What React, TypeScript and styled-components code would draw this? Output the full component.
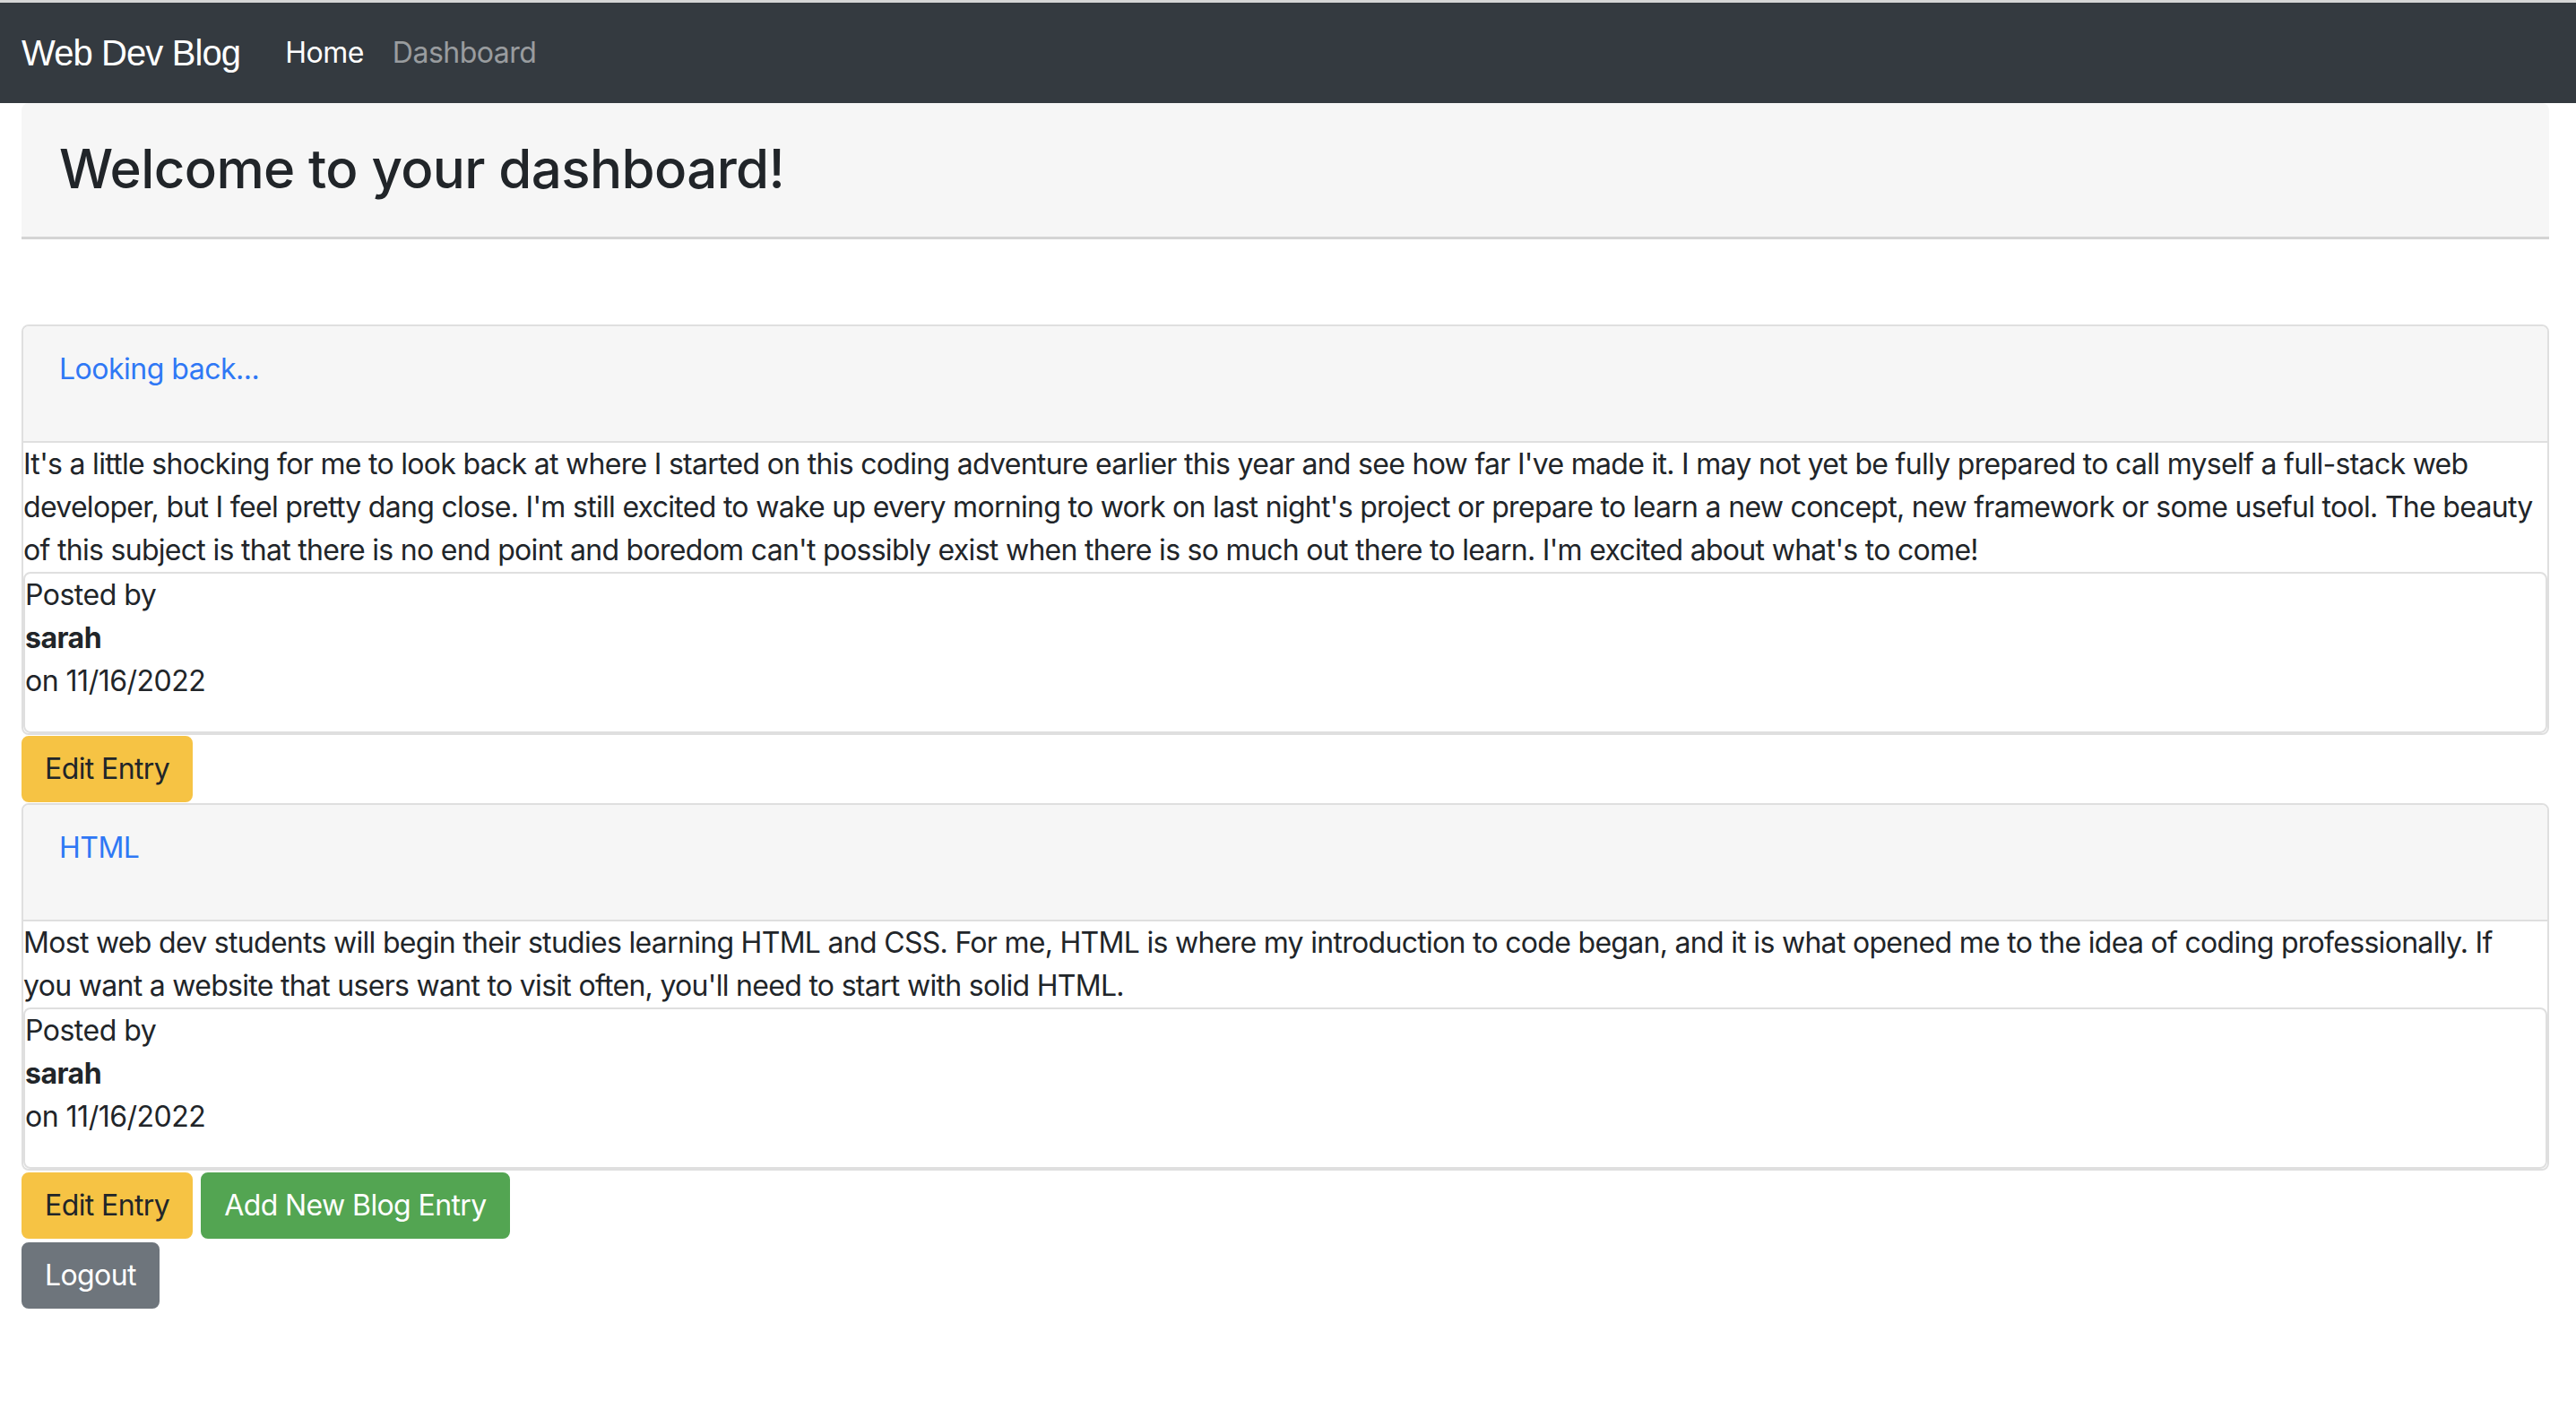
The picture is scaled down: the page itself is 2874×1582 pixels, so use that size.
import React from "react";
import styled, { createGlobalStyle } from "styled-components";

const GlobalStyle = createGlobalStyle`
  html, body { margin: 0; padding: 0; background: #ffffff; }
  body {
    font-family: Inter, "Noto Sans", "Liberation Sans", sans-serif;
    color: #212529;
    font-size: 32px;
    line-height: 48px;
    letter-spacing: -0.7px;
  }
  * { box-sizing: border-box; }
`;

const Navbar = styled.nav`
  display: flex;
  align-items: center;
  height: 115px;
  border-top: 3px solid #d6d6d6;
  background: #343a40;
  padding: 0 24px;
`;

const Brand = styled.a`
  font-family: "Liberation Sans", Arial, sans-serif;
  font-size: 40px;
  line-height: 60px;
  letter-spacing: -0.9px;
  color: #ffffff;
  margin-right: 34px;
  text-decoration: none;
`;

const NavLink = styled.a<{ $active?: boolean }>`
  font-size: 32px;
  line-height: 48px;
  letter-spacing: -0.5px;
  padding: 0 16px;
  color: ${(p) => (p.$active ? "#ffffff" : "rgba(255,255,255,0.5)")};
  text-decoration: none;
`;

const Main = styled.main`
  padding: 0 30px 0 24px;
`;

const PageHeader = styled.header`
  display: flex;
  align-items: center;
  height: 152px;
  padding: 0 42px 4px;
  background: #f6f6f6;
  border-bottom: 3px solid #d4d4d4;
  border-radius: 8px 8px 0 0;
`;

const PageTitle = styled.h2`
  margin: 0;
  font-size: 60px;
  line-height: 72px;
  font-weight: 500;
  letter-spacing: -0.6px;
  color: #212529;
`;

const PostList = styled.section`
  margin-top: 95px;
  display: flex;
  flex-direction: column;
`;

const Card = styled.article`
  border: 2px solid #dfdfdf;
  border-radius: 8px;
  overflow: hidden;
`;

const CardHeader = styled.div`
  padding: 24px 40px;
  background: #f6f6f6;
  border-bottom: 2px solid #dfdfdf;
`;

const TitleLine = styled.p`
  margin: 0 0 32px;
  letter-spacing: -0.5px;
`;

const TitleLink = styled.a`
  color: #2f78f5;
  text-decoration: none;
`;

const Body = styled.p`
  margin: 0;
`;

const Meta = styled.div`
  border: 2px solid #dfdfdf;
  border-radius: 8px;
  padding-bottom: 32px;
  letter-spacing: -0.5px;
`;

const MetaLine = styled.div<{ $bold?: boolean }>`
  font-weight: ${(p) => (p.$bold ? 700 : 400)};
`;

const ButtonRow = styled.div<{ $top?: number }>`
  display: flex;
  gap: 9px;
  margin-top: ${(p) => p.$top ?? 1}px;
  margin-bottom: 1px;
`;

const Button = styled.button<{ $variant: "warning" | "success" | "secondary" }>`
  font-family: inherit;
  font-size: 32px;
  line-height: 48px;
  letter-spacing: -0.6px;
  padding: 11px 24px;
  border-radius: 8px;
  border: 2px solid
    ${(p) =>
      p.$variant === "warning" ? "#f6c344" : p.$variant === "success" ? "#53a552" : "#6e757c"};
  background: ${(p) =>
    p.$variant === "warning" ? "#f6c344" : p.$variant === "success" ? "#53a552" : "#6e757c"};
  color: ${(p) => (p.$variant === "warning" ? "#212529" : "#ffffff")};
  cursor: pointer;
`;

type Post = { title: string; body: string; author: string; date: string };

const posts: Post[] = [
  {
    title: "Looking back...",
    body:
      "It's a little shocking for me to look back at where I started on this coding adventure earlier this year and see how far I've made it. I may not yet be fully prepared to call myself a full-stack web developer, but I feel pretty dang close. I'm still excited to wake up every morning to work on last night's project or prepare to learn a new concept, new framework or some useful tool. The beauty of this subject is that there is no end point and boredom can't possibly exist when there is so much out there to learn. I'm excited about what's to come!",
    author: "sarah",
    date: "11/16/2022",
  },
  {
    title: "HTML",
    body:
      "Most web dev students will begin their studies learning HTML and CSS. For me, HTML is where my introduction to code began, and it is what opened me to the idea of coding professionally. If you want a website that users want to visit often, you'll need to start with solid HTML.",
    author: "sarah",
    date: "11/16/2022",
  },
];

function PostCard({ post }: { post: Post }) {
  return (
    <Card>
      <CardHeader>
        <TitleLine>
          <TitleLink href="#">{post.title}</TitleLink>
        </TitleLine>
      </CardHeader>
      <Body>{post.body}</Body>
      <Meta>
        <MetaLine>Posted by</MetaLine>
        <MetaLine $bold>{post.author}</MetaLine>
        <MetaLine>on {post.date}</MetaLine>
      </Meta>
    </Card>
  );
}

export default function App() {
  return (
    <>
      <GlobalStyle />
      <Navbar>
        <Brand href="#">Web Dev Blog</Brand>
        <NavLink href="#" $active>
          Home
        </NavLink>
        <NavLink href="#">Dashboard</NavLink>
      </Navbar>
      <Main>
        <PageHeader>
          <PageTitle>Welcome to your dashboard!</PageTitle>
        </PageHeader>
        <PostList>
          <PostCard post={posts[0]} />
          <ButtonRow>
            <Button $variant="warning">Edit Entry</Button>
          </ButtonRow>
          <PostCard post={posts[1]} />
          <ButtonRow $top={2}>
            <Button $variant="warning">Edit Entry</Button>
            <Button $variant="success">Add New Blog Entry</Button>
          </ButtonRow>
          <ButtonRow $top={3}>
            <Button $variant="secondary">Logout</Button>
          </ButtonRow>
        </PostList>
      </Main>
    </>
  );
}
